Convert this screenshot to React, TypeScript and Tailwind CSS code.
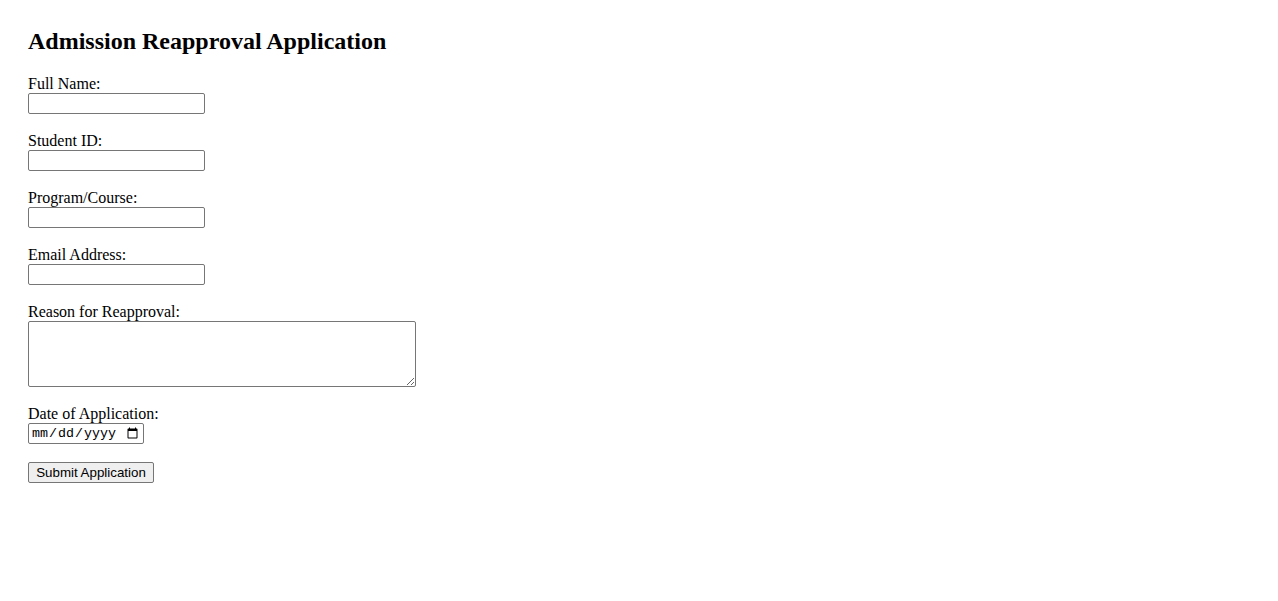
import React from 'react';

const fields = [
  { id: 'fullName', label: 'Full Name:', type: 'text' },
  { id: 'studentId', label: 'Student ID:', type: 'text' },
  { id: 'program', label: 'Program/Course:', type: 'text' },
  { id: 'email', label: 'Email Address:', type: 'email' },
];

export default function App() {
  return (
    <div className="min-h-screen bg-white p-7 font-['Liberation_Serif',serif] text-base text-black">
      <h2 className="mb-5 text-2xl leading-[27px] font-bold">Admission Reapproval Application</h2>
      <form onSubmit={(e) => e.preventDefault()}>
        {fields.map((f) => (
          <div key={f.id} className="mb-[18px]">
            <label htmlFor={f.id} className="block leading-[18px]">{f.label}</label>
            <input
              id={f.id}
              type={f.type}
              className="block h-[21px] w-[177px] rounded-[2px] border border-[#767676] bg-white px-[2px] text-[13.33px] font-['Liberation_Sans',sans-serif]"
            />
          </div>
        ))}
        <div className="mb-[18px]">
          <label htmlFor="reason" className="block leading-[18px]">Reason for Reapproval:</label>
          <textarea
            id="reason"
            className="block h-[66px] w-[388px] rounded-[2px] border border-[#767676] bg-white p-[2px] text-[13.33px] font-['Liberation_Mono',monospace]"
          />
        </div>
        <div className="mb-[18px]">
          <label htmlFor="date" className="block leading-[18px]">Date of Application:</label>
          <input
            id="date"
            type="date"
            className="block h-[21px] w-[116px] rounded-[2px] border border-[#767676] bg-white px-[2px] text-[13.33px] font-['Liberation_Mono',monospace]"
          />
        </div>
        <button
          type="submit"
          className="block h-[21px] w-[126px] rounded-[2px] border border-[#767676] bg-[#efefef] px-[6px] text-[13.33px] leading-none text-black font-['Liberation_Sans',Arial,sans-serif]"
        >
          Submit Application
        </button>
      </form>
    </div>
  );
}
